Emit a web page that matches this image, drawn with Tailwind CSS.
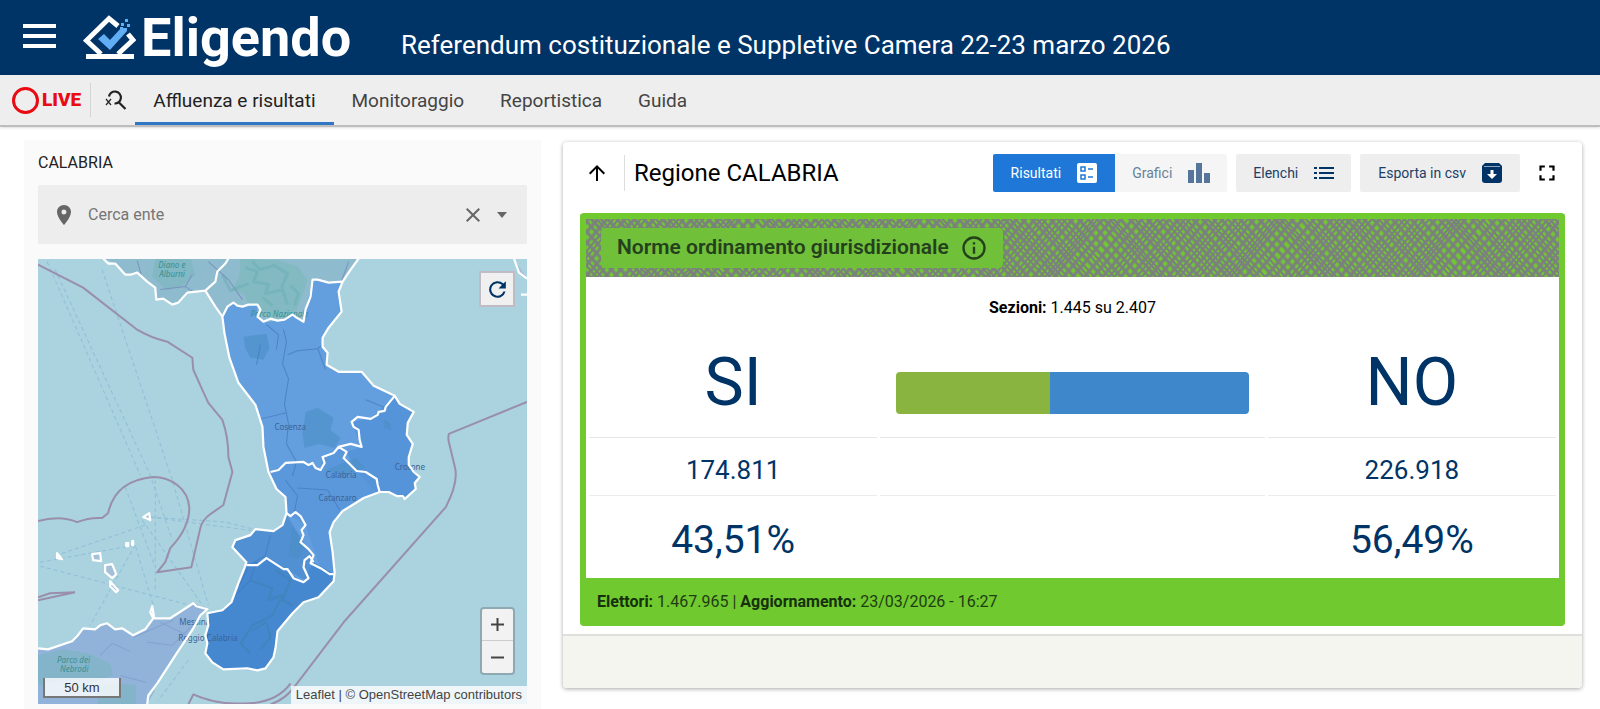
<!DOCTYPE html>
<html lang="it">

<head>
  <meta charset="utf-8">
  <meta name="viewport" content="width=device-width, initial-scale=1">
  <title>Eligendo</title>
  <script src="https://cdn.jsdelivr.net/npm/@tailwindcss/browser@4"></script>
</head>

<body class="min-h-screen flex flex-col bg-white font-[Roboto,sans-serif] text-black">
  <!-- Testata -->
  <header class="flex items-center h-[75px] bg-[#003366] pl-[23px] text-white">
    <button type="button" aria-label="Menu" class="flex flex-col gap-[6px] w-[33px] mb-1">
      <span class="h-[4px] w-full bg-white"></span>
      <span class="h-[4px] w-full bg-white"></span>
      <span class="h-[4px] w-full bg-white"></span>
    </button>
    <a href="#" class="flex items-center ml-[27px]">
      <svg class="w-[53px] h-[46px]" viewBox="0 0 53 46" fill="none">
        <path d="M35 11 26 3.500 3.500 25.500 18 39M45 19l5 6L35 39" stroke="#fff" stroke-width="5" />
        <path d="M3 41.500h48" stroke="#fff" stroke-width="5" />
        <path d="m15 24 6-5 6 6 12-13 5 4-17 19z" fill="#62aef5" />
        <path d="M38 8h3v3h-3zM42 4h3v3h-3zM44 9h3v3h-3zM40 13h4v3h-4zM37 12h3v3h-3z" fill="#62aef5" />
      </svg>
      <span class="ml-[5px] w-[206px] text-[54px] leading-[74px] font-bold">Eligendo</span>
    </a>
    <h1 class="ml-[54px] mt-[14px] text-[26px] leading-8 whitespace-nowrap">Referendum costituzionale e Suppletive Camera 22-23 marzo 2026</h1>
  </header>

  <!-- Navigazione -->
  <nav class="flex items-stretch h-[52px] bg-[#eee] border-b-2 border-[#bdbdbd] shadow-sm text-[19px] text-[#444]">
    <a href="#" class="flex items-center gap-[3px] my-2 pl-3 pr-[9px] border-r border-[#d5d5d5] text-[#e80c12] font-black">
      <span class="size-[27px] rounded-full border-[3px] border-[#e80c12]"></span>LIVE
    </a>
    <button type="button" aria-label="Ricerca" class="flex items-center pl-[14px] pr-2">
      <svg class="w-[22px] h-5" viewBox="0 0 22 20" fill="none" stroke="#222">
        <path d="M4 6.500a6 6 0 1 1 5.500 7M13.500 12l7 7" stroke-width="2.200" />
        <path d="m1 9 5 6M6 9l-5 6" stroke-width="1.200" />
      </svg>
    </button>
    <a href="#" class="flex items-center px-[18px] pt-[5px] border-b-3 border-[#2f76c5] text-[#222]">Affluenza e risultati</a>
    <a href="#" class="flex items-center px-[18px] pt-[2px]">Monitoraggio</a>
    <a href="#" class="flex items-center px-[18px] pt-[2px]">Reportistica</a>
    <a href="#" class="flex items-center px-[18px] pt-[2px]">Guida</a>
  </nav>

  <main class="grow grid grid-cols-[517fr_1019fr] gap-[22px] pl-6 pr-[18px] pt-[13px]">
    <!-- Colonna mappa -->
    <aside class="flex flex-col bg-[#fafafa] px-[14px] pb-[5px]">
      <label for="ente" class="pt-[13px] pb-[12px] text-base leading-5 text-[#222]">CALABRIA</label>
      <div class="flex items-center h-[59px] rounded-xs bg-[#ededed] pl-[14px] pr-5 text-[#666]">
        <svg class="size-[24px] shrink-0" viewBox="0 0 24 24" fill="currentColor"><path d="M12 2C8.130 2 5 5.130 5 9c0 5.250 7 13 7 13s7-7.750 7-13c0-3.870-3.130-7-7-7zm0 9.500a2.500 2.500 0 1 1 0-5 2.500 2.500 0 0 1 0 5z" /></svg>
        <input id="ente" type="text" placeholder="Cerca ente" class="grow min-w-0 ml-3 text-base outline-none placeholder:text-[#757575]">
        <button type="button" aria-label="Cancella"><svg class="size-6" viewBox="0 0 24 24" fill="currentColor"><path d="M19 6.410 17.590 5 12 10.590 6.410 5 5 6.410 10.590 12 5 17.590 6.410 19 12 13.410 17.590 19 19 17.590 13.410 12z" /></svg></button>
        <button type="button" aria-label="Apri elenco" class="ml-3"><svg class="w-[10px] h-[6px]" viewBox="0 0 10 6" fill="currentColor"><path d="M0 0h10L5 6z" /></svg></button>
      </div>

      <div class="relative mt-[15px] h-[445px] overflow-hidden bg-[#aad3df]">
        <svg class="w-full h-full" viewBox="38 259 488 445" preserveAspectRatio="xMidYMid slice" fill="none" stroke-linejoin="round">
          <defs>
            <clipPath id="land">
              <path d="M222 317 227 307 233 303 242 307 257 305 257 317 263 322 277 321 292 315 303 322 305 310 312 280 328 283 342 282 338 292 341 312 328 328 322 338 322 347 327 353 326 365 338 372 361 372 373 386 394 396 399 404 413 412 407 423 406 435 412 444 408 457 408 465 419 477 414 483 415 489 404 499 388 492 379 492 363 498 342 511 333 522 329 532 334 572 333 581 318 597 303 602 292 613 277 631 273 657 265 668 257 670 223 669 212 662 205 653 207 643 205 635 208 625 207 613 222 610 231 602 244 568 246 562 232 547 235 540 250 535 255 529 273 531 282 525 286 513 285 497 276 489 268 472 263 447 262 427 255 405 238 383 229 358 224 333z" />
            </clipPath>
          </defs>
          <!-- rotte dei traghetti -->
          <g stroke="#86b3d6" stroke-dasharray="4 3" opacity=".7">
            <path d="M47 262 140 475M55 270 150 475 172 540M102 270l70 210 36 125M125 487l30 80M142 520 205 609M150 517l105 14M40 562l95-17 18 60M40 566l165 43M135 545l-45 80M150 517l75 5 40 10M145 525 57 555M155 480v110M188 660l-30 40" />
          </g>
          <!-- acque territoriali -->
          <g stroke="#9a8faa" stroke-width="2">
            <path d="M38 265 83 288 137 330Q150 338 167 342L192 358 193 370 202 390 208 403 222 420Q228 437 228 457L232 472 223 505 210 514Q202 520 200 528L191 567 157 572 165 562 170 548Q189 528 189 508C188 488 170 477 153 477 130 479 113 490 108 513L102 518Q90 517 77 522 60 515 38 521" />
            <path d="M526 402 448 434Q447 438 448 442L454 467Q458 482 445 507L343 622 295 685Q285 699 270 704M188 704l5-10q22 10 47 9 35 1 50-20M38 600l37-8M38 597l12-4 25-1" />
          </g>
          <!-- Campania e Basilicata -->
          <path d="M103 259 115 264 125 275 137 273 147 282 155 288 156 300 163 299 172 305 178 303 187 293 205 291 215 307 222 317 227 307 233 303 242 307 257 305 257 317 263 322 277 321 292 315 303 322 305 310 312 280 328 283 342 282 350 270 358 259z" fill="#8fbbcf" />
          <path d="M155 259h35l5 16-14 12-14 4-15-14z" fill="#82b8c4" />
          <path d="M240 259l38 2 20 6 9 14-7 20-7 17-20 2-22-10-8-16-12-3 8-14z" fill="#83bac2" />
          <path d="m245 268 12 4-4 10 15 3-3 9 17-4 5 15M272 265l15 9-6 14M222 275l8 16 18-7M252 262l8 8 14-4M290 286l8 8-4 12M262 298l10 8" stroke="#67adb1" stroke-width="3" opacity=".5" />
          <path d="M137 261l4 14M160 290l25-3 7-12M208 262l20 18 14 20M348 262l-8 22M185 287l8 5" stroke="#7c92bd" />
          <!-- Sicilia -->
          <path d="M38 648 48 649 72 641 83 628 95 629 107 623 115 629 122 628 133 635 145 629 153 618 170 618 193 603 207 609 200 615 193 628 177 652 157 683 148 695 147 704H38z" fill="#91b3da" />
          <path d="M38 655l25-6 25 4 22 10 3 12-20 7-30-2-25 5zM98 684h38v20H98z" fill="#84b4ca" />
          <path d="M133 637l40-17M147 642l25 3 20-20M120 675l26 7M160 622l25 12M146 704l8-14M100 655l12-12 18 8" stroke="#7b96c8" opacity=".6" />
          <!-- Calabria -->
          <g clip-path="url(#land)">
            <path d="M200 270h230v410H200z" fill="#639ede" />
            <path d="M270 472 285 463 303 462 312 463 320 470 322 457 338 447 346 452 343 458 356 471 376 479 379 492 333 590 320 568 305 525 286 513 260 480z" fill="#5a98db" />
            <path d="M394 396l-24 23-19 3 10 25-15 5 10 19 23 25 60 0V390z" fill="#5594d9" />
            <path d="M225 540l60-27 28 45-5 24-42-24-20 7z" fill="#5090d3" />
            <path d="M246 565 266 558 283 569 303 582 313 562 334 574 334 590 270 680H195V610z" fill="#4588cf" />
            <path d="M243 337l23-3 3 14-6 12-13-2-5-9zM305 412l12-4 16 10-3 12 10 8-6 10-16-4-14 4-2-14zM325 470l30-12 10 10-22 8zM383 420l6 2 2 8-8-2zM292 527l12 18-6 14-10-4z" fill="#4b90c4" opacity=".6" />
            <path d="M283 330l3 12-4 22 6 15-4 25 4 20-2 20 10 18-4 14M256 420l30-7M287 355l10-4 20-2 8-6M317 348l8 22M285 480l12 16-4 20M297 488l30 2 12 20M365 400l20 8M266 325l12 10-2 15M270 535l-5 20-16 10-10 20M260 345l-4 20M230 600l20-20 6-18" stroke="#4278bf" opacity=".7" />
            <path d="M250 580l22 8-4 12 14-5-10 20-20 10-12 18 10 10M275 570l15 10-8 20 10 5M252 630l14-8 4 15-10 12" stroke="#3d7fae" stroke-width="2" opacity=".5" />
          </g>
          <g font-family="Noto Sans, sans-serif" font-size="8" fill="#3a6396">
            <text x="274" y="430">Cosenza</text>
            <text x="325" y="478">Calabria</text>
            <text x="318" y="501">Catanzaro</text>
            <text x="394" y="470">Crotone</text>
            <text x="179" y="625">Messina</text>
            <text x="178" y="641">Reggio Calabria</text>
            <g fill="#38908f" font-style="italic">
              <text x="158" y="268">Diano e</text>
              <text x="159" y="277">Alburni</text>
              <text x="250" y="317">Parco Nazionale</text>
              <text x="57" y="663">Parco dei</text>
              <text x="60" y="672">Nebrodi</text>
            </g>
          </g>
          <!-- confini -->
          <g stroke="#fff" stroke-width="2.200">
            <path d="M103 259 108 264 115 264 125 275 131 275 137 273 147 282 155 288 156 300 163 299 172 305 178 303 187 293 205 291 215 307 222 317M205 291 215 282 217 272 225 264 228 259M342 282 350 270 358 259" />
            <path d="M222 317 227 307 233 303 237 306 242 307 248 305 257 305 260 310 257 317 263 322 270 319 277 321 284 320 292 315 296 318 303 322 305 310 310 297 312 280 317 280 328 283 342 282 338 292 341 312 328 328 322 338 322 347 327 353 326 365 338 372 361 372 373 386 394 396 399 404 413 412 407 423 406 435 412 444 408 457 408 465 413 472 419 477 414 483 415 489 404 499 402 496 396 496 388 492 379 492 363 498 342 511 333 522 329 532 332 552 334 572 333 581 318 597 303 602 292 613 277 631 275 648 273 657 265 668 257 670 247 668 223 669 212 662 205 653 207 643 205 635 208 625 207 613 222 610 231 602 238 583 244 568 246 562 232 547 235 540 250 535 255 529 273 531 282 525 286 513 285 497 276 489 268 472 263 447 262 427 255 405 238 383 229 358 224 333z" />
            <path d="M394 396 385 407 384 411 378 412 377 415 370 419 357 417 351 422 353 427 358 430 359 440 361 447 350 444 338 447 333 453 322 457 324 463 320 470 315 468 312 463 308 465 303 462 285 463 278 470 270 472M338 447 346 452 343 458 356 471 365 472 376 479 377 485 379 492M286 513 290 516 295 512 300 516 305 525 301 530 303 535 300 542 308 549 313 555 310 563 320 568 329 574 333 574M246 565 257 565 266 558 283 569 287 569 293 578 303 582 308 578 303 567 304 560 309 556 313 562" />
            <path d="M38 648 48 649 72 641 77 636 83 628 95 629 100 625 107 623 115 629 122 628 133 635 145 629 153 618 150 612 152 606 154 618 170 618 193 603 196 606 207 609 200 615 193 628 177 652 157 683 148 695 147 704" />
            <path d="M143 517l6-4 1 7zM57 553l5 6-5-1zM92 554l8-1 1 8-8-1zM105 565l7-1 4 10-4 4-7-6zM110 581l8 9-2 2-6-6zM126 543h2v3h-2zM132 541h1v4h-1zM513 259l5 14 8 6M520 295h6" fill="#a6bfd8" />
          </g>
        </svg>

        <button type="button" aria-label="Ricarica mappa" class="absolute right-3 top-3 flex items-center justify-center size-9 border-2 border-[#c1bcc4] bg-[#f0f0f0] text-[#003366]">
          <svg class="size-[25px]" viewBox="0 0 24 24" fill="currentColor"><path d="M17.650 6.350A8 8 0 1 0 19.730 14h-2.080A6 6 0 1 1 12 6c1.660 0 3.140.690 4.220 1.780L13 11h7V4z" /></svg>
        </button>
        <div class="absolute right-3 bottom-[29px] flex flex-col w-[35px] rounded-sm border-2 border-[#8fa9b2] bg-[#f2f2f2] text-[#444]">
          <button type="button" aria-label="Ingrandisci" class="flex items-center justify-center h-8 border-b border-[#ccc]"><svg class="size-[13px]" viewBox="0 0 13 13" stroke="currentColor" stroke-width="2"><path d="M6.500 0v13M0 6.500h13" /></svg></button>
          <button type="button" aria-label="Riduci" class="flex items-center justify-center h-8"><svg class="size-[13px]" viewBox="0 0 13 13" stroke="currentColor" stroke-width="2"><path d="M0 6.500h13" /></svg></button>
        </div>
        <div class="absolute left-[5px] bottom-[6px] w-[78px] h-5 border-2 border-t-0 border-[#777] bg-white/80 text-center text-[13px] leading-5 font-['Liberation_Sans',sans-serif] text-[#333]">50 km</div>
        <div class="absolute right-0 bottom-0 h-[18px] px-[5px] bg-white/80 text-[13px] leading-[18px] whitespace-nowrap font-['Liberation_Sans',sans-serif] text-[#444]">
          <a href="#">Leaflet</a> | © <a href="#">OpenStreetMap</a> contributors
        </div>
      </div>
    </aside>

    <!-- Risultati -->
    <section class="self-start mt-[2px] rounded-sm bg-white shadow-[0_1px_4px_rgba(0,0,0,0.35)]">
      <div class="flex items-center h-[62px] pl-[22px] pr-[22px]">
        <button type="button" aria-label="Livello superiore"><svg class="size-6" viewBox="0 0 24 24" fill="currentColor"><path d="m4 12 1.410 1.410L11 7.830V20h2V7.830l5.580 5.590L20 12l-8-8-8 8z" /></svg></button>
        <h2 class="ml-[15px] pl-[9px] border-l border-[#ddd] text-2xl leading-9 whitespace-nowrap">Regione CALABRIA</h2>
        <div class="ml-auto flex items-center gap-[9px] text-sm text-[#1b3f68]">
          <div class="flex h-[38px] rounded-xs overflow-hidden">
            <button type="button" class="flex items-center gap-4 px-[18px] bg-[#1f78d8] text-white">Risultati
              <svg class="size-5" viewBox="0 0 20 20"><rect width="20" height="20" rx="2" fill="#fff" /><g fill="none" stroke="#1f78d8" stroke-width="1.500"><path d="M4 4h4v4H4zM4 12h4v4H4zM11 6h5M11 14h5" /></g></svg>
            </button>
            <button type="button" class="flex items-center gap-4 px-[17px] bg-[#f5f5f5] text-[#6a7f98]">Grafici
              <svg class="w-[22px] h-5" viewBox="0 0 22 20" fill="#55759a"><path d="M0 7h6v13H0zM8 0h6v20H8zM16 10h6v10h-6z" /></svg>
            </button>
          </div>
          <button type="button" class="flex items-center gap-4 h-[38px] px-[17px] rounded-xs bg-[#eee]">Elenchi
            <svg class="w-5 h-[14px]" viewBox="0 0 20 14" fill="#003366"><path d="M0 1h3v2H0zM0 6h3v2H0zM0 11h3v2H0zM5 1h15v2H5zM5 6h15v2H5zM5 11h15v2H5z" /></svg>
          </button>
          <button type="button" class="flex items-center gap-4 h-[38px] px-[18px] rounded-xs bg-[#eee]">Esporta in csv
            <svg class="size-5" viewBox="0 0 20 20"><path d="M3 0h14l3 3v14a3 3 0 0 1-3 3H3a3 3 0 0 1-3-3V3z" fill="#003366" /><path d="M2 3.500h16" stroke="#8ba3bd" /><path d="M8.500 7h3v4H15l-5 5-5-5h3.500z" fill="#fff" /></svg>
          </button>
          <button type="button" aria-label="Schermo intero" class="ml-[5px] text-black"><svg class="size-[26px]" viewBox="0 0 24 24" fill="currentColor"><path d="M7 14H5v5h5v-2H7v-3zm-2-4h2V7h3V5H5v5zm12 7h-3v2h5v-5h-2v3zM14 5v2h3v3h2V5h-5z" /></svg></button>
        </div>
      </div>

      <div class="mt-[9px] mx-[17px] rounded-sm border-6 border-b-0 border-[#6fc92f] bg-[#6fc92f] overflow-hidden">
        <!-- fascia con trama incrociata -->
        <div class="relative flex items-center h-[58px] pl-[15px]">
          <svg class="absolute inset-0 w-full h-full" aria-hidden="true">
            <defs>
              <pattern id="hatchA" width="200" height="127" patternUnits="userSpaceOnUse" patternTransform="rotate(48)">
                <path d="M0 1h200M0 8h200M0 15h200M0 22h200M0 36h200M0 50h200M0 57h200M0 70h200M0 84h200M0 91h200M0 104h200M0 111h200M0 123h200" stroke="#7b7f7f" stroke-width="3" />
                <path d="M0 27h200M0 31h200M0 42h200M0 46h200M0 62h200M0 66h200M0 75h200M0 79h200M0 96h200M0 100h200M0 116h200M0 119h200" stroke="#7b7f7f" stroke-width="2" />
              </pattern>
              <pattern id="hatchB" width="200" height="139" patternUnits="userSpaceOnUse" patternTransform="rotate(-50)">
                <path d="M0 2h200M0 9h200M0 16h200M0 30h200M0 37h200M0 52h200M0 59h200M0 66h200M0 81h200M0 95h200M0 102h200M0 118h200M0 125h200M0 132h200" stroke="#7b7f7f" stroke-width="3" />
                <path d="M0 21h200M0 25h200M0 42h200M0 46h200M0 71h200M0 75h200M0 86h200M0 90h200M0 107h200M0 111h200M0 114h200" stroke="#7b7f7f" stroke-width="2" />
              </pattern>
            </defs>
            <rect width="100%" height="100%" fill="#6fc92f" />
            <rect width="100%" height="100%" fill="url(#hatchA)" />
            <rect width="100%" height="100%" fill="url(#hatchB)" />
          </svg>
          <h3 class="relative flex items-center gap-[11px] h-10 pl-4 pr-[15px] rounded-sm bg-[#70c03a] text-[21px] font-semibold text-[#24401c] whitespace-nowrap">Norme ordinamento giurisdizionale
            <button type="button" aria-label="Informazioni"><svg class="size-7" viewBox="0 0 24 24" fill="currentColor"><path d="M11 7h2v2h-2zm0 4h2v6h-2zm1-9a10 10 0 1 0 0 20 10 10 0 0 0 0-20zm0 18a8 8 0 1 1 0-16 8 8 0 0 1 0 16z" /></svg></button>
          </h3>
        </div>
        <div class="bg-white">
          <p class="pt-[21px] pb-[17px] text-center text-base leading-5"><b>Sezioni:</b> 1.445 su 2.407</p>
          <table class="w-full table-fixed border-separate border-spacing-x-[3px] border-spacing-y-0 text-center text-[#003366]">
            <colgroup>
              <col class="w-[30%]">
              <col>
              <col class="w-[30%]">
            </colgroup>
            <thead>
              <tr class="h-[103px] text-[66px] leading-[72px]">
                <th scope="col" class="pb-[6px] border-b border-[#e6e6e6] font-normal">SI</th>
                <td class="px-4 pt-[14px] border-b border-[#e6e6e6]">
                  <div class="flex h-[42px] rounded-sm overflow-hidden">
                    <div class="bg-[#8ab440]" style="width: 43.51%"></div>
                    <div class="bg-[#3f87cb]" style="width: 56.49%"></div>
                  </div>
                </td>
                <th scope="col" class="pb-[6px] border-b border-[#e6e6e6] font-normal">NO</th>
              </tr>
            </thead>
            <tbody>
              <tr class="h-[58px] text-[26px] leading-8">
                <td class="pt-[6px] border-b border-[#ececec]">174.811</td>
                <td class="border-b border-[#ececec]"></td>
                <td class="pt-[6px] border-b border-[#ececec]">226.918</td>
              </tr>
              <tr class="h-[82px] text-[39px] leading-[44px]">
                <td class="pt-[6px]">43,51%</td>
                <td></td>
                <td class="pt-[6px]">56,49%</td>
              </tr>
            </tbody>
          </table>
        </div>
        <p class="h-12 pl-[11px] text-base leading-[48px] text-[#1f3d12]"><b class="text-[#16300c]">Elettori:</b> 1.467.965 | <b class="text-[#16300c]">Aggiornamento:</b> 23/03/2026 - 16:27</p>
      </div>
      <div class="mt-2 h-[54px] rounded-b-sm border-t-2 border-[#dfdfdb] bg-[#f4f5ee]"></div>
    </section>
  </main>
</body>

</html>
